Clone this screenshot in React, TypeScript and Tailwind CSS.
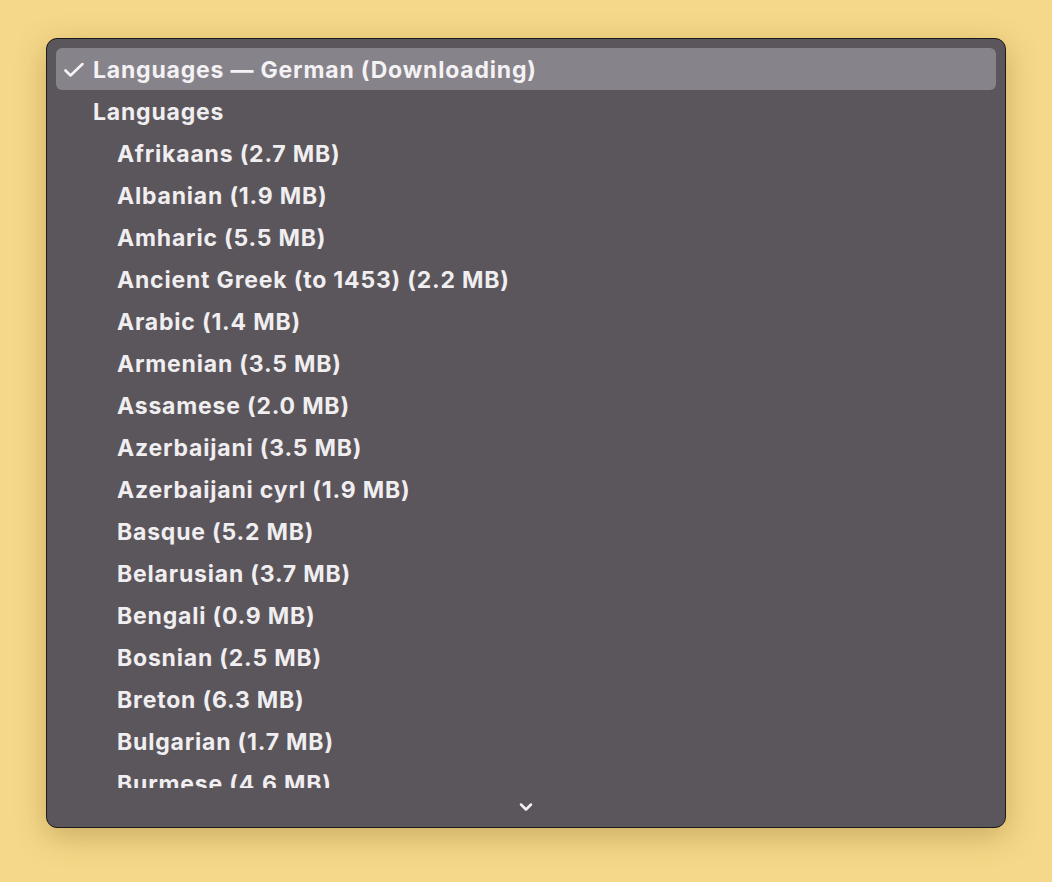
import { ChevronDown } from "lucide-react";

const languages = [
  "Afrikaans (2.7 MB)",
  "Albanian (1.9 MB)",
  "Amharic (5.5 MB)",
  "Ancient Greek (to 1453) (2.2 MB)",
  "Arabic (1.4 MB)",
  "Armenian (3.5 MB)",
  "Assamese (2.0 MB)",
  "Azerbaijani (3.5 MB)",
  "Azerbaijani cyrl (1.9 MB)",
  "Basque (5.2 MB)",
  "Belarusian (3.7 MB)",
  "Bengali (0.9 MB)",
  "Bosnian (2.5 MB)",
  "Breton (6.3 MB)",
  "Bulgarian (1.7 MB)",
  "Burmese (4.6 MB)",
];

const row = "h-[42px] pt-[2px] flex items-center text-[#f0eef0] text-[23px] font-bold tracking-[0.035em]";

export default function App() {
  return (
    <div className="w-[1052px] h-[882px] bg-[#f5d889] pt-[38px] pl-[46px] font-['Inter',sans-serif]">
      <div className="w-[960px] h-[790px] rounded-[11px] border border-[#1c1a1c] bg-[#5b565b] shadow-[0_8px_30px_rgba(120,90,30,0.35)] flex flex-col overflow-hidden">
        <div className="h-[749px] overflow-hidden px-[9px] pt-[9px]">
          <div className={`${row} rounded-[6px] bg-[#87838a] text-[#f4f2f4]`}>
            <span className="w-[37px] pl-[8px] flex items-center">
              <svg width="20" height="14" viewBox="0 0 20 14" fill="none">
                <path d="M1.5 7.5 L6.5 12.5 L18.5 1" stroke="#f4f2f4" strokeWidth="2.6" strokeLinecap="round" strokeLinejoin="round" />
              </svg>
            </span>
            <span>Languages — German (Downloading)</span>
          </div>
          <div className={`${row} pl-[37px]`}>Languages</div>
          {languages.map((lang) => (
            <div key={lang} className={`${row} pl-[61px]`}>
              {lang}
            </div>
          ))}
        </div>
        <div className="flex-1 flex justify-center pt-[9px]">
          <ChevronDown size={20} strokeWidth={3} className="text-[#f4f2f4]" />
        </div>
      </div>
    </div>
  );
}
